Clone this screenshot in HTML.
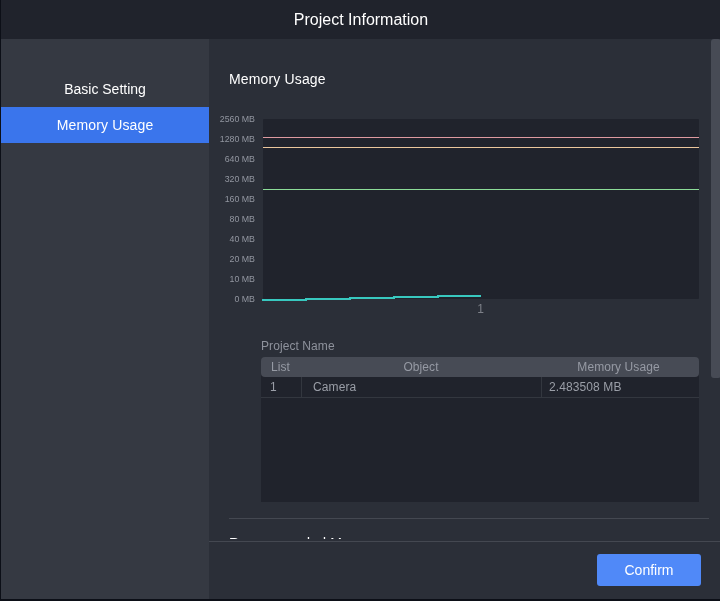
<!DOCTYPE html>
<html>
<head>
<meta charset="utf-8">
<title>Project Information</title>
<style>
  html, body { margin:0; padding:0; }
  body { width:720px; height:601px; overflow:hidden; background:#0c0f17; position:relative;
         font-family:"Liberation Sans", sans-serif; }
  #root { position:absolute; left:0; top:0; width:720px; height:601px; will-change:transform; }
  .abs { position:absolute; }
  #titlebar { left:1px; top:0; width:719px; height:39px; background:#20232c; }
  #title { left:1px; top:0; width:720px; height:40px; line-height:40px; text-align:center; color:#fff; font-size:16px; }
  #sidebar { left:1px; top:39px; width:208px; height:560px; background:#353942; }
  #main { left:209px; top:39px; width:511px; height:560px; background:#2b2f38; }
  .nav { left:1px; width:208px; height:36px; line-height:36px; text-align:center; color:#fff; font-size:14px; }
  #nav2 { background:#3a75ec; letter-spacing:0.15px; }
  #heading { left:229px; top:69px; height:20px; line-height:20px; color:#fff; font-size:14px; white-space:nowrap; letter-spacing:0.15px; }
  #scroll { left:711px; top:39px; width:10px; height:339px; background:#474b55; border-radius:3px; }
  #plot { left:263px; top:119px; width:436px; height:180px; background:#20232c; border-radius:1px; }
  .yl { left:209px; width:46px; height:10px; line-height:10px; text-align:right; color:#9296a0; font-size:8.8px; white-space:nowrap; }
  .hl { left:263px; width:436px; height:1px; }
  #xl { left:470px; top:302px; width:21px; height:14px; line-height:14px; text-align:center; color:#7d8088; font-size:12px; }
  #pn { left:261px; top:339px; height:14px; line-height:14px; color:#8e929c; letter-spacing:0.08px; font-size:12px; white-space:nowrap; }
  #tbody { left:261px; top:360px; width:438px; height:142px; background:#20232c; }
  #thead { left:261px; top:357px; width:438px; height:20px; background:#474b55; border-radius:4px; }
  .th, .td { height:20px; line-height:20px; font-size:12px; white-space:nowrap; }
  .th { color:#969aa4; top:357px; letter-spacing:0.08px; }
  .td { color:#9a9ea7; top:377px; letter-spacing:0.1px; }
  .vd { top:377px; width:1px; height:20px; background:#33373f; }
  #rowline { left:261px; top:397px; width:438px; height:1px; background:#33373f; }
  #divider { left:229px; top:518px; width:480px; height:1px; background:#444851; }
  #clip { left:209px; top:519px; width:511px; height:20px; overflow:hidden; }
  #rec { left:20px; top:14px; height:20px; line-height:20px; color:#fff; font-size:14px; white-space:nowrap; letter-spacing:0.2px; }
  #footline { left:209px; top:541px; width:511px; height:1px; background:#444851; }
  #btn { left:597px; top:554px; width:104px; height:32px; line-height:32px; text-align:center; background:#5089f8; color:#fff; font-size:14px; border-radius:3px; }
</style>
</head>
<body>
<div id="root">
<div class="abs" id="titlebar"></div>
<div class="abs" id="title">Project Information</div>
<div class="abs" id="sidebar"></div>
<div class="abs" id="main"></div>

<div class="abs nav" id="nav1" style="top:71px;">Basic Setting</div>
<div class="abs nav" id="nav2" style="top:107px;">Memory Usage</div>

<div class="abs" id="heading">Memory Usage</div>
<div class="abs" id="scroll"></div>

<div class="abs" id="plot"></div>
<div class="abs yl" style="top:114px;">2560 MB</div>
<div class="abs yl" style="top:134px;">1280 MB</div>
<div class="abs yl" style="top:154px;">640 MB</div>
<div class="abs yl" style="top:174px;">320 MB</div>
<div class="abs yl" style="top:194px;">160 MB</div>
<div class="abs yl" style="top:214px;">80 MB</div>
<div class="abs yl" style="top:234px;">40 MB</div>
<div class="abs yl" style="top:254px;">20 MB</div>
<div class="abs yl" style="top:274px;">10 MB</div>
<div class="abs yl" style="top:294px;">0 MB</div>

<div class="abs hl" style="top:137px; background:#de9aa0;"></div>
<div class="abs hl" style="top:147px; background:#ebc69c;"></div>
<div class="abs hl" style="top:189px; background:#8cdc98;"></div>

<svg class="abs" style="left:0; top:0;" width="720" height="601" viewBox="0 0 720 601">
  <path d="M262 300 H306 V299 H350 V298 H394 V297 H438 V296 H481" fill="none" stroke="#38c8bf" stroke-width="2"/>
</svg>
<div class="abs" id="xl">1</div>

<div class="abs" id="pn">Project Name</div>
<div class="abs" id="tbody"></div>
<div class="abs" id="thead"></div>
<div class="abs th" style="left:271px;">List</div>
<div class="abs th" style="left:301px; width:240px; text-align:center;">Object</div>
<div class="abs th" style="left:541px; width:155px; text-align:center;">Memory Usage</div>
<div class="abs td" style="left:270px;">1</div>
<div class="abs td" style="left:313px;">Camera</div>
<div class="abs td" style="left:549px;">2.483508 MB</div>
<div class="abs vd" style="left:301px;"></div>
<div class="abs vd" style="left:541px;"></div>
<div class="abs" id="rowline"></div>

<div class="abs" id="divider"></div>
<div class="abs" id="clip"><div class="abs" id="rec">Recommended Memory</div></div>
<div class="abs" id="footline"></div>
<div class="abs" id="btn">Confirm</div>
</div>
</body>
</html>
